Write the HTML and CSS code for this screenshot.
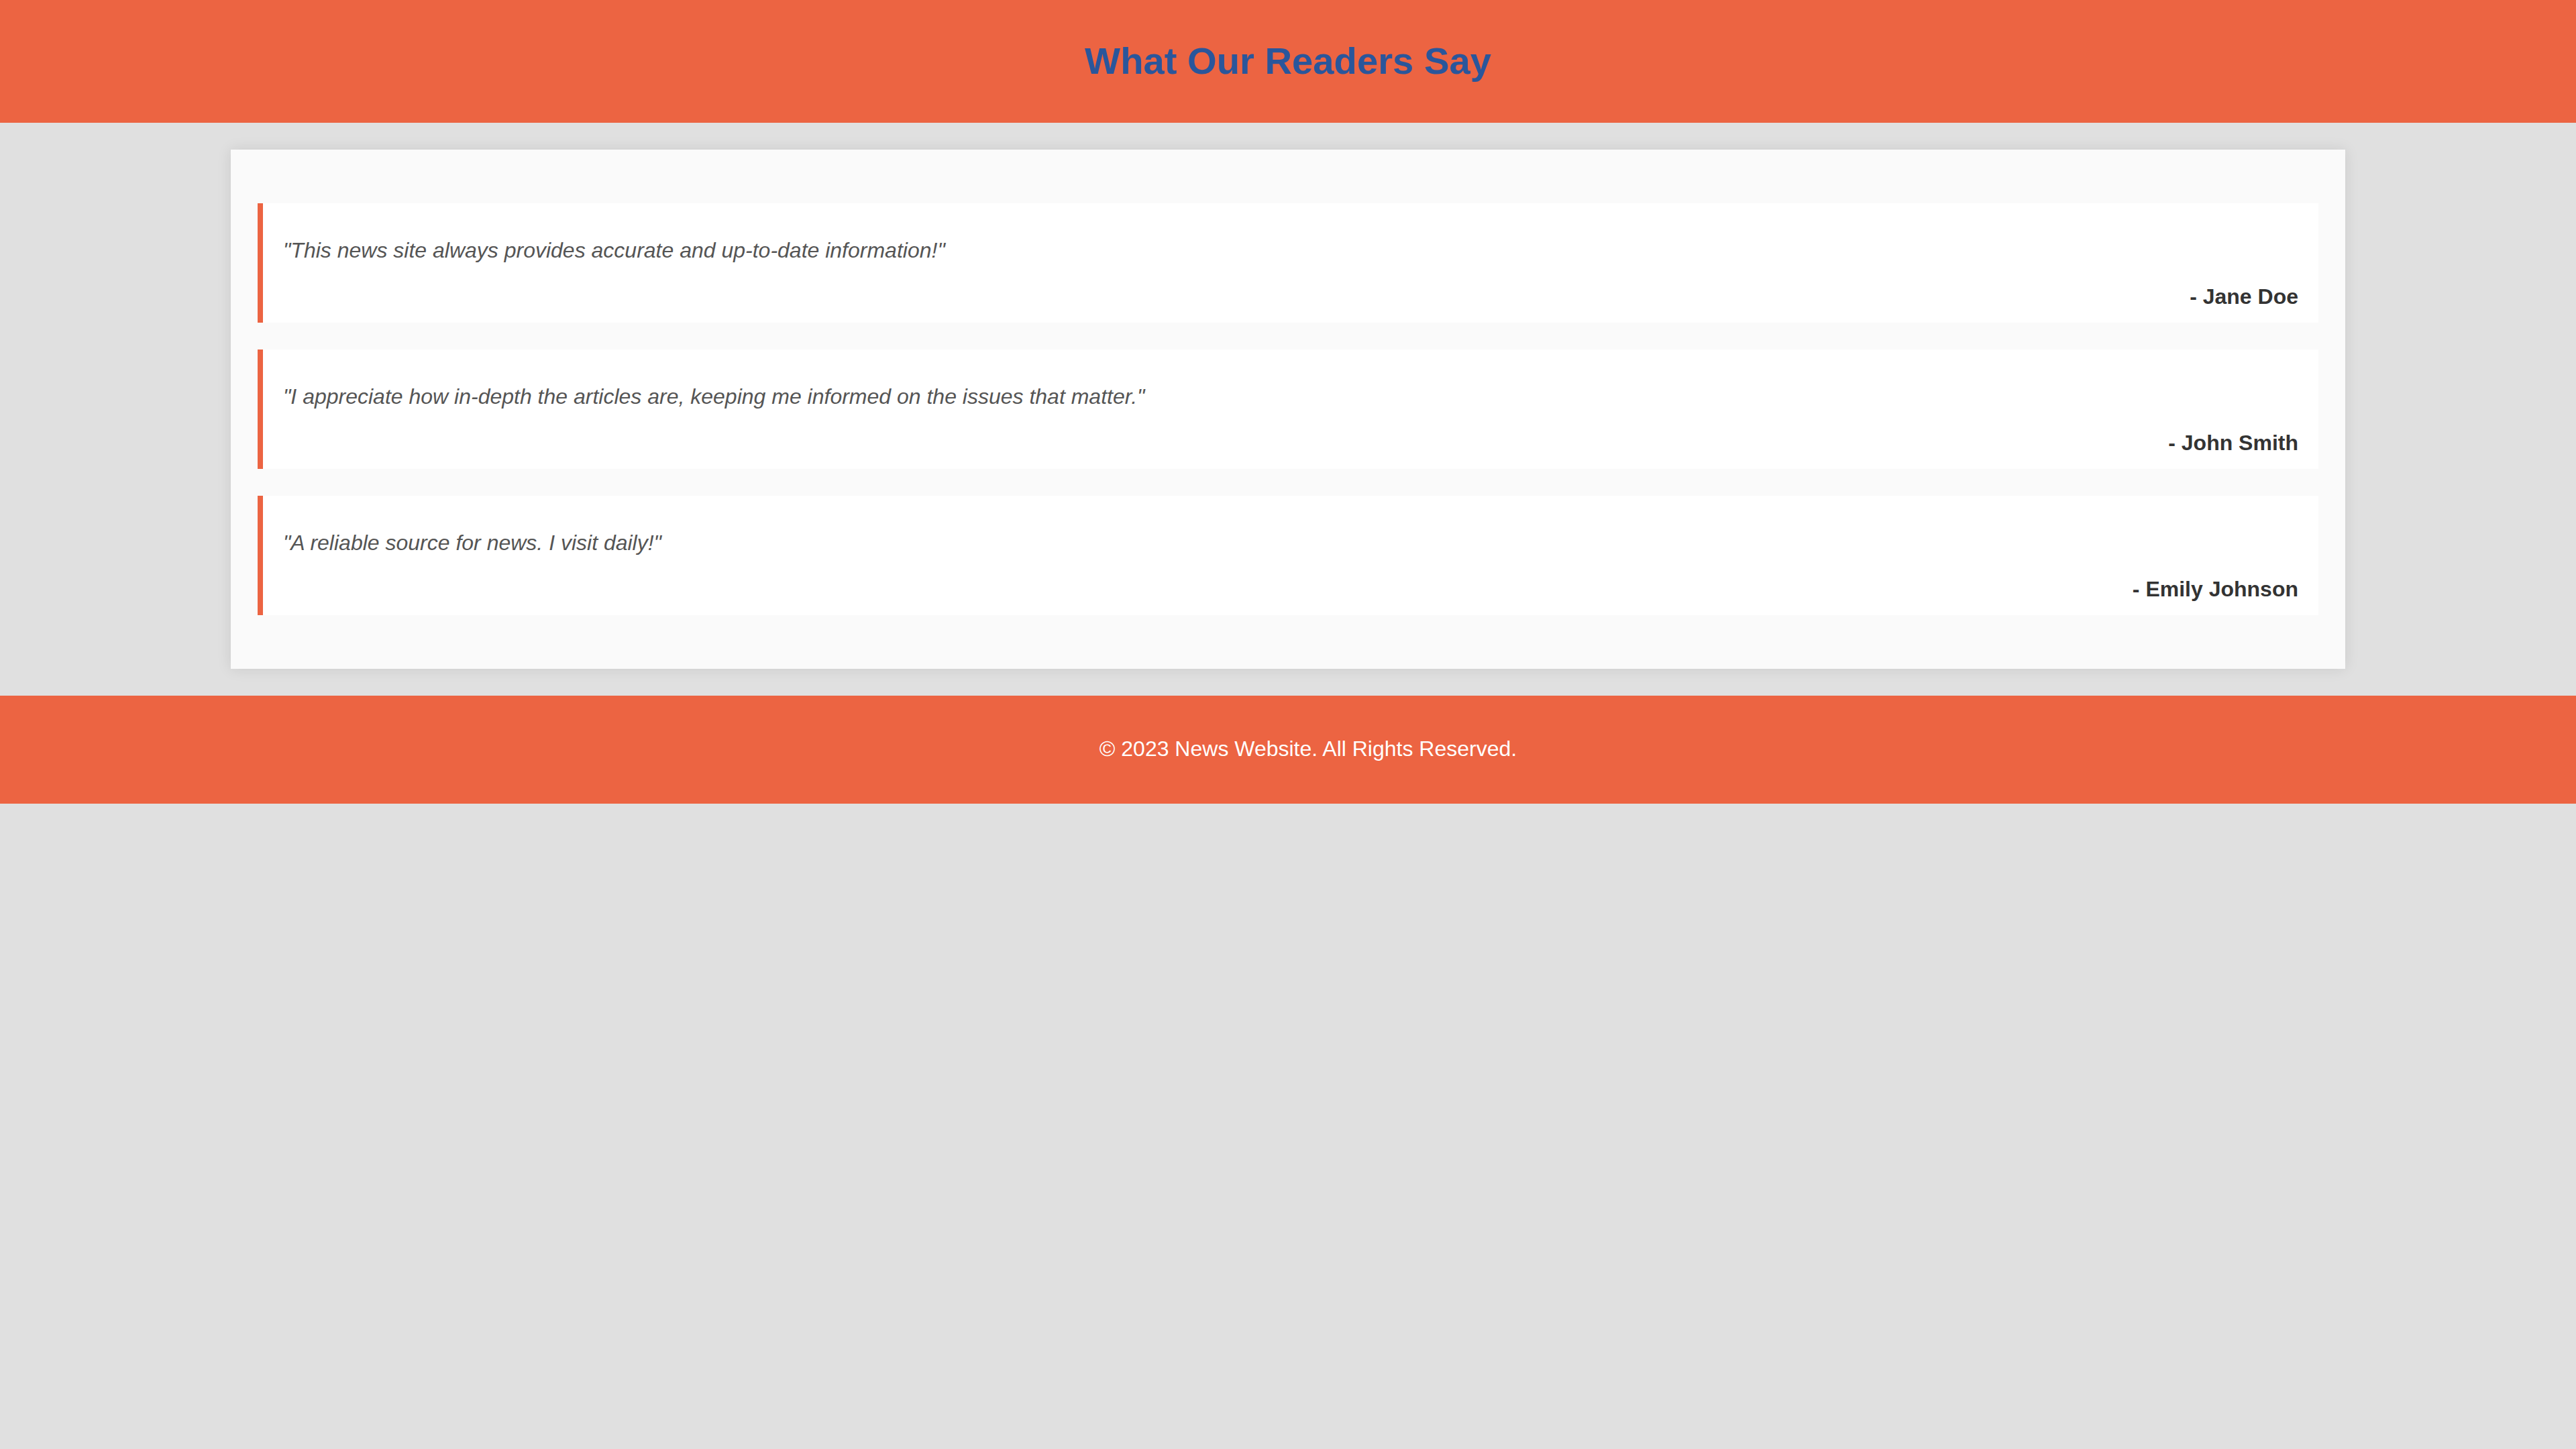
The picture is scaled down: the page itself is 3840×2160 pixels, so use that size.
FILE: index.html
```html
<!DOCTYPE html>
<html lang="en">
<head>
<meta charset="utf-8">
<title>What Our Readers Say</title>
<link rel="stylesheet" href="styles.css">
</head>
<body>
<header class="site-header">
  <h1 class="site-title">What Our Readers Say</h1>
</header>
<main class="card">
  <div class="testimonial">
    <p class="quote">"This news site always provides accurate and up-to-date information!"</p>
    <p class="author">- Jane Doe</p>
  </div>
  <div class="testimonial">
    <p class="quote">"I appreciate how in-depth the articles are, keeping me informed on the issues that matter."</p>
    <p class="author">- John Smith</p>
  </div>
  <div class="testimonial">
    <p class="quote">"A reliable source for news. I visit daily!"</p>
    <p class="author">- Emily Johnson</p>
  </div>
</main>
<footer class="site-footer">
  <p class="footer-text">&copy; 2023 News Website. All Rights Reserved.</p>
</footer>
</body>
</html>
```
FILE: styles.css
```css
html, body {
  margin: 0;
  padding: 0;
}
body {
  background: #e0e0e0;
  font-family: "Liberation Sans", Arial, Helvetica, sans-serif;
  font-size: 32px;
}
.site-header {
  background: #ec6442;
  padding: 58px 0 59px;
  text-align: center;
}
.site-title {
  margin: 0;
  font-size: 56.2px;
  font-weight: bold;
  color: #2a569b;
  line-height: 66px;
}
.card {
  display: block;
  width: 3152px;
  box-sizing: border-box;
  margin: 40px auto;
  padding: 40px;
  background: #fafafa;
  box-shadow: 0 0 20px rgba(0, 0, 0, 0.1);
}
.testimonial {
  margin: 40px 0;
  padding: 20px 30px;
  background: #ffffff;
  border-left: 8px solid #ec6442;
}
.quote {
  margin: 32px 0;
  font-style: italic;
  color: #555555;
  line-height: normal;
}
.author {
  margin: 0;
  text-align: right;
  font-weight: bold;
  color: #333333;
  line-height: normal;
}
.site-footer {
  background: #ec6442;
  padding: 61px 0 63px 60px;
  text-align: center;
}
.footer-text {
  margin: 0;
  color: #ffffff;
  line-height: normal;
}
```
